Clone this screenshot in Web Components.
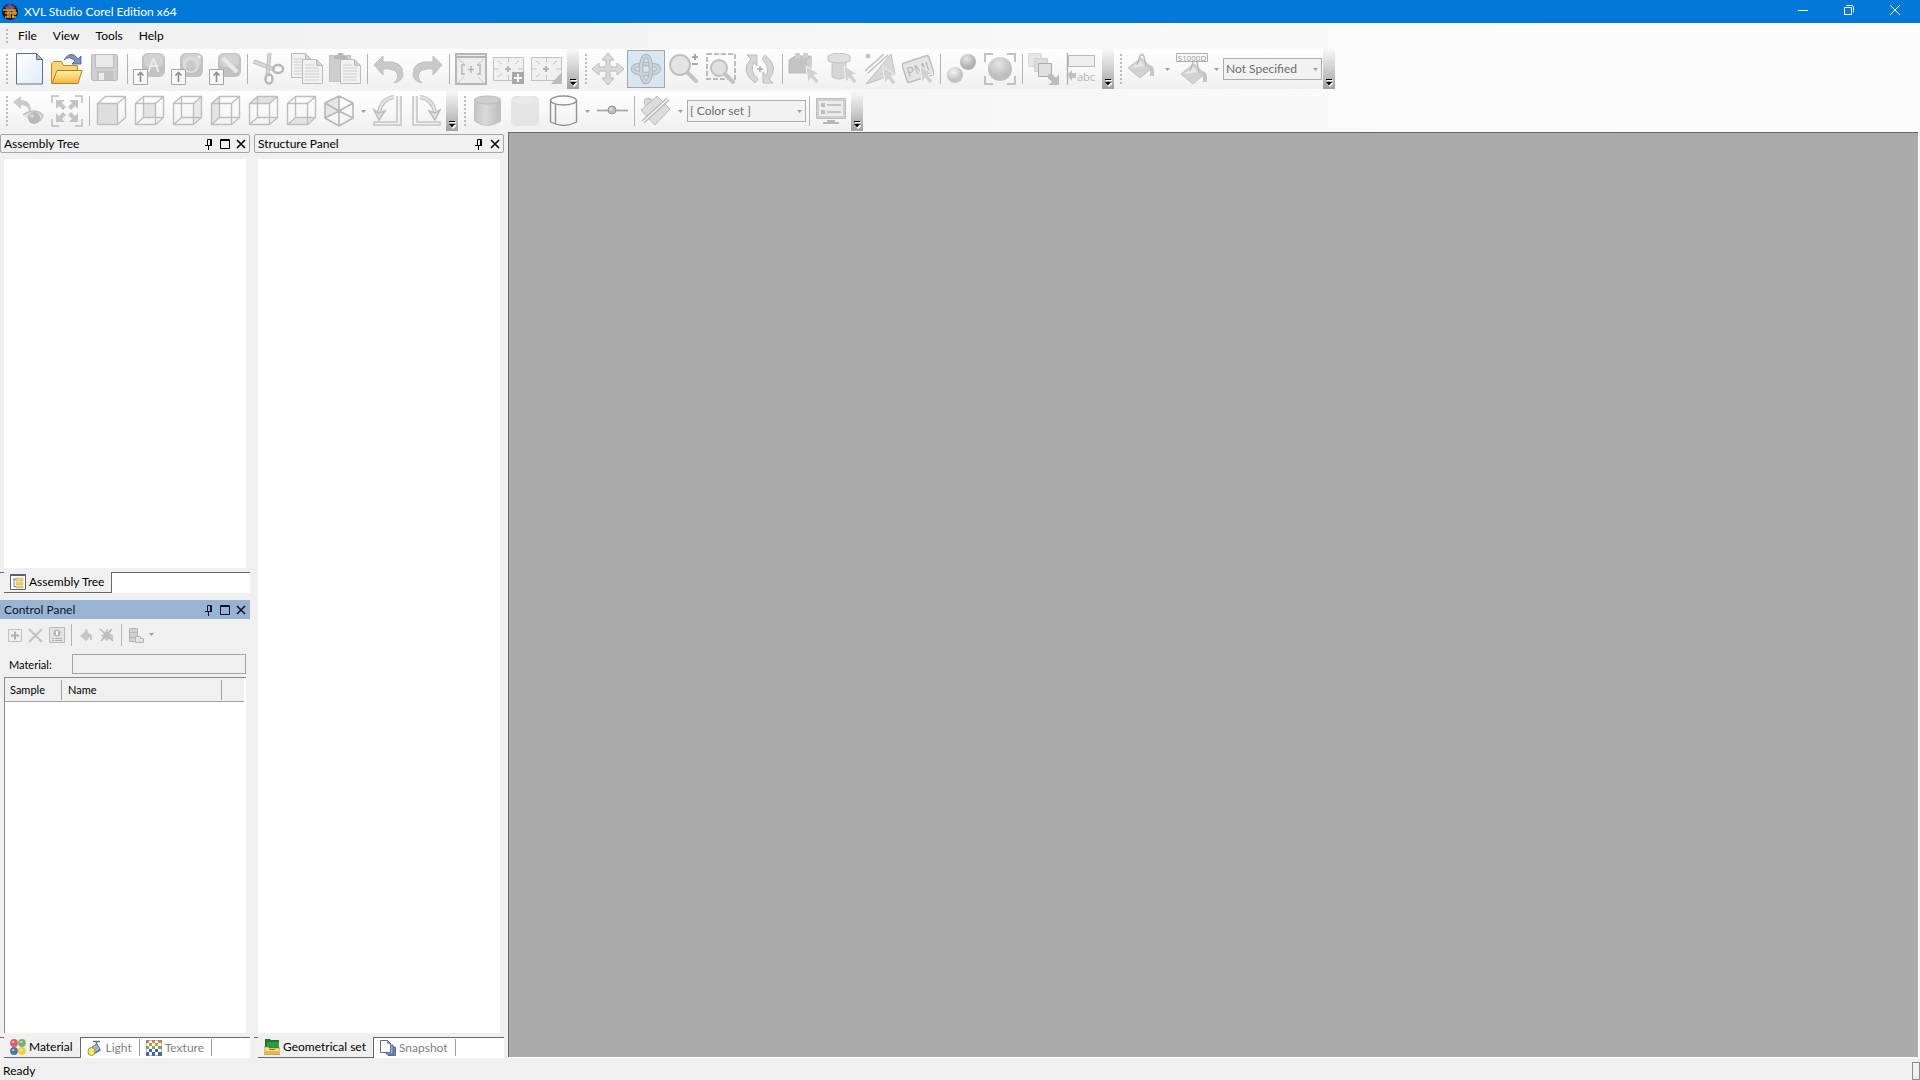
<!DOCTYPE html>
<html lang="en">
<head>
<meta charset="utf-8">
<title>XVL Studio Corel Edition x64</title>
<style>
    html, body {
        height: 100%;
        margin: 0;
    }

    body {
        font: 12px/16px Lato, "Open Sans", sans-serif;
        color: #000;
        background: #f0f0f0;
        overflow: hidden;
    }
</style>
</head>
<body>
<studio-app></studio-app>

<script>
// ---------- icons ----------
const S = 'fill="none" stroke="#b6b6b6"'
const cube = (front, extra = '', back = true) => `
    <g stroke="#bebebe" stroke-width="1.4" stroke-linejoin="round" fill="none">
        ${extra}
        ${back ? '<path d="M10.5 1.5v21h20M10.5 22.5l-8 7"/>' : ''}
        <path fill="${front}" d="M2.5 8.5h20v21h-20z"/>
        <path d="M2.5 8.5l8-7h20v21l-8 7M22.5 8.5l8-7"/>
    </g>`
const badge = inner => `
    <rect x="9" y="0" width="23" height="24" rx="6" fill="#c2c2c2"/>
    <rect x="11" y="1" width="19" height="13" rx="5" fill="#d2d2d2"/>
    ${inner}
    <path fill="#f7f7f7" stroke="#a6a6a6" d="M.5 16.5h14v15H.5z"/>
    <path stroke="#8e8e8e" stroke-width="1.6" fill="none" d="M7.5 29V20M4.5 22.500l3-3 3 3"/>`
const sheet = (x, y) => `
    <path fill="#f1f1f1" stroke="#bcbcbc" d="M${x}.5 ${y}.5h14l6 6v18h-20z"/>
    <path fill="#d4d4d4" stroke="#bcbcbc" d="M${x + 14}.5 ${y}.5v6h6z"/>
    <path stroke="#cfcfcf" d="M${x + 3} ${y + 6}h9M${x + 3} ${y + 9}h14M${x + 3} ${y + 12}h14M${x + 3} ${y + 15}h14M${x + 3} ${y + 18}h14M${x + 3} ${y + 21}h14"/>`
const cursor = (x, y) => `<path transform="translate(${x} ${y})" fill="#d2d2d2" stroke="#f4f4f4" d="M0 0l13 8-5 1 5 6-3 3-5-6-3 5z"/>`
const bucket = `
    <path fill="#d2d2d2" stroke="#c4c4c4" d="M1 15L14 5l11 10-12 10z"/>
    <path fill="#e8e8e8" d="M4 15l9-7 5 5z"/>
    <path fill="none" stroke="#b8b8b8" stroke-width="1.4" d="M10 12l3-9q3-4 4 1l2 9"/>
    <path fill="#c6c6c6" d="M17 13q10-3 10 5v5h-4v-5q0-4-6-5z"/>`
const smallBucket = `
    <path fill="#c6c6c6" d="M2 9l6-5 5 5-5 5z"/>
    <path fill="none" stroke="#c2c2c2" d="M6 8l2-6 3 6"/>
    <path fill="#c6c6c6" d="M10 7q4-1 4 3v3h-2V10z"/>`
const corners = '<path fill="none" stroke="#c2c2c2" stroke-width="2" d="M1 9V1h8M23 1h8v8M31 23v8h-8M9 31H1v-8"/>'

const icons = {
    app: `<circle cx="8" cy="8" r="8" fill="#24192b"/><path fill="#72508e" d="M3 3l5-3 5 3-2 4H5z"/><path fill="none" stroke="#e09b25" stroke-width="1.5" d="M1 6h5v7M3 9h4M8 14V6h5v5M8 9h7M11 6v8"/><path stroke="#ffcf55" d="M3 13h4M10 13h4"/>`,
    min: '<path stroke="#fff" d="M3 8.5h10"/>',
    restore: '<path fill="none" stroke="#fff" d="M3.500 5.500h7v7h-7zM5.500 3.500h5q2 0 2 2v5"/>',
    close: '<path stroke="#fff" d="M3 3l10 10M13 3L3 13"/>',
    pin: '<path fill="none" stroke="currentColor" d="M4.500 7V1.500h4V7M2 7.500h7M5.500 8v4"/><path stroke="currentColor" d="M7.500 2v5"/>',
    max: '<path fill="none" stroke="currentColor" d="M1.500 1.500h9v9h-9z"/><path stroke="currentColor" d="M1 2.500h10"/>',
    x: '<path stroke="currentColor" stroke-width="1.6" d="M2 2l8 8M10 2L2 10"/>',
    drop: '<path fill="#9d9d9d" d="M0 0h5L2.500 3z"/>',
    overflow: '<path fill="#fff" d="M2 2h6v1H2zM2 5h6v1L5 9 2 6z"/><path fill="#000" d="M1 1h6v1H1zM1 4h6L4 7.500z"/>',

    newFile: `<linearGradient id="g" x1="0" y1="0" x2="1" y2="1"><stop offset="0" stop-color="#fff"/><stop offset="1" stop-color="#e2ebfa"/></linearGradient>
        <path fill="url(#g)" stroke="#5f6f8f" d="M3.500.5h20l6 6v24.500h-26z"/><path fill="#aab9d6" stroke="#5f6f8f" d="M23.500.5v6h6z"/>`,
    open: `<linearGradient id="g" x1="0" y1="0" x2="0" y2="1"><stop offset="0" stop-color="#fff0a8"/><stop offset="1" stop-color="#f3b83c"/></linearGradient>
        <path fill="#f8d678" stroke="#b68a2c" d="M.5 30.500v-20l2-2h8l2 4h14v6"/>
        <path fill="url(#g)" stroke="#b07f22" d="M1 30.500l5-13h25l-4 13z"/>
        <path fill="#7f93bd" stroke="#465a86" stroke-width=".8" d="M13 7q7-11 14-1l3-3v8l-9 0 3-3q-6-6-11-1z"/>`,
    save: `<rect x="2.500" y="1.500" width="26" height="26" rx="2" fill="#d0d0d0" stroke="#b6b6b6"/><path fill="#e9e9e9" stroke="#bdbdbd" d="M6.500 1.500h18v13h-18z"/><path fill="#c2c2c2" d="M8 18h16v9H8z"/><path fill="#ececec" d="M10 20h5v7h-5z"/>`,
    importA: badge('<path fill="none" stroke="#e9e9e9" stroke-width="2" d="M20.500 5l-5 14M20.500 5l5 14M16 13h9"/>'),
    importB: badge('<circle cx="20" cy="12" r="7" fill="none" stroke="#dedede" stroke-width="2"/><circle cx="20" cy="12" r="4" fill="#c9c9c9"/><circle cx="28" cy="4" r="1.500" fill="#f2f2f2"/>'),
    importC: badge('<path stroke="#e9e9e9" stroke-width="4" d="M14 5l14 14"/>'),
    cut: `<path fill="#dadada" stroke="#bcbcbc" d="M0 10l2-3 20 8-2 3zM15 1l3-1-2 22-3-1z"/><ellipse cx="25" cy="16" rx="5" ry="4" fill="none" stroke="#b8b8b8" stroke-width="2.500"/><ellipse cx="16" cy="26" rx="3.500" ry="4.500" fill="none" stroke="#b8b8b8" stroke-width="2.500"/>`,
    copy: sheet(0, 0) + sheet(11, 6),
    paste: `<path fill="#cecece" stroke="#c2c2c2" d="M.5 2.500h21v26H.5z"/><path fill="#b8b8b8" d="M5 3h3l1-3h5l1 3h3v3H5z"/>` + sheet(11, 6),
    undo: '<path fill="#cacaca" stroke="#c0c0c0" d="M1 12L10 3v6q20-2 20 12 0 7-9 9 5-4 3-10-3-5-14-4v6z"/>',
    redo: '<path fill="#cacaca" stroke="#c0c0c0" d="M31 12L22 3v6Q2 7 2 21q0 7 9 9-5-4-3-10 3-5 14-4v6z"/>',
    fitAll: `<path fill="#ededed" stroke="#b6b6b6" stroke-width="2" d="M1 1h30v30H1z"/><path stroke="#b6b6b6" stroke-width="2" d="M1 4h30"/><path stroke="#c6c6c6" d="M3 6l6 5M29 6l-6 5M3 30l6-6M29 30l-6-6"/><path ${S} stroke-width="1.500" d="M10 12H7v9h3M22 12h3v9h-3M16 13v7M13 16.500h6"/>`,
    viewAdd: `<path fill="#f0f0f0" stroke="#c2c2c2" d="M.5 4.500h30v23H.5z"/><path stroke="#b4b4b4" stroke-width="2" d="M15 13v6M12 16h6"/><path stroke="#c4c4c4" d="M15.500 5v5M15.500 22v5M1 16h5M25 16h5M5 8l4 3M26 8l-4 3M5 24l4-3"/><path fill="#a8a8a8" d="M19 19h12v12H19z"/><path stroke="#fff" stroke-width="2" d="M25 21v8M21 25h8"/>`,
    viewEdit: `<path fill="#f0f0f0" stroke="#c2c2c2" d="M.5 4.500h30v23H.5z"/><path stroke="#b4b4b4" stroke-width="2" d="M15 13v6M12 16h6"/><path stroke="#c4c4c4" d="M15.500 5v5M15.500 22v5M1 16h5M25 16h5M5 8l4 3M26 8l-4 3M5 24l4-3"/><path fill="#bdbdbd" d="M31 19v12H20z"/>`,

    pan: '<path fill="#dadada" stroke="#bababa" d="M16 0l6 7h-4v7h7v-4l7 6-7 6v-4h-7v7h4l-6 7-6-7h4v-7H7v4l-7-6 7-6v4h7V7h-4z"/>',
    rotate: '<g fill="none"><ellipse cx="16" cy="16" rx="13" ry="5" stroke="#adb6bd" stroke-width="4.500"/><ellipse cx="16" cy="16" rx="13" ry="5" stroke="#cad3da" stroke-width="2.500"/><ellipse cx="16" cy="16" rx="5" ry="13" stroke="#adb6bd" stroke-width="4.500"/><ellipse cx="16" cy="16" rx="5" ry="13" stroke="#cad3da" stroke-width="2.500"/><path stroke="#cad3da" stroke-width="2.500" d="M7 19.600q3 1.200 7 1.400"/></g>',
    zoom: '<path stroke="#c4c4c4" stroke-width="4" stroke-linecap="round" d="M19 19l9 9"/><circle cx="12" cy="12" r="10" fill="#e4e4e4" stroke="#c0c0c0" stroke-width="2"/><path stroke="#a8a8a8" stroke-width="2" d="M24 4h6M27 1v6M24 11h6"/>',
    zoomArea: '<path fill="none" stroke="#a8a8a8" stroke-width="1.500" stroke-dasharray="5 2" d="M1 1h28v25H1z"/><path stroke="#c4c4c4" stroke-width="4" stroke-linecap="round" d="M19 21l8 8"/><circle cx="13" cy="15" r="8" fill="#e0e0e0" stroke="#c0c0c0" stroke-width="2"/>',
    spin: '<path fill="#d6d6d6" stroke="#bebebe" d="M11 30Q-5 18 7 6L3 2h10v11l-3-4Q5 18 14 26zM21 2q15 12 4 24l4 4H19V19l3 4q5-8-4-17z"/><path stroke="#aaa" stroke-width="1.500" d="M16 13v6M13 16h6"/>',
    pickPart: '<path fill="#c4c4c4" stroke="#bababa" d="M1 7l6-4h16l-4 4v13H1z"/><path fill="#cfcfcf" d="M7 0h5v5H7zM15 0h5v5h-5zM19 7l5-4v12l-5 5z"/>' + cursor(18, 13),
    pickFace: '<path fill="#d6d6d6" stroke="#c6c6c6" d="M6 7h14v17q-7 4-14 0z"/><path fill="#e0e0e0" stroke="#c2c2c2" d="M2 3q11-6 22 0v5q-11 4-22 0z"/>' + cursor(18, 13),
    pickEdge: '<circle cx="4" cy="3" r="2.500" fill="#c6c6c6"/><path stroke="#c0c0c0" stroke-width="1.500" d="M1 18L20 1M4 20L24 2"/><path fill="#d8d8d8" stroke="#c0c0c0" d="M2 31L27 1l4 20z"/>' + cursor(19, 14),
    pmi: '<g transform="rotate(-18 16 16)"><rect x="2" y="6" width="28" height="20" rx="2" fill="#e5e5e5" stroke="#bebebe" stroke-width="1.500"/><text x="16" y="21" text-anchor="middle" font-size="13" fill="#b4b4b4" font-family="Open Sans">PMI</text></g>' + cursor(18, 13),
    balls: '<radialGradient id="g" cx=".4" cy=".3"><stop offset="0" stop-color="#f4f4f4"/><stop offset="1" stop-color="#c4c4c4"/></radialGradient><radialGradient id="h" cx=".4" cy=".3"><stop offset="0" stop-color="#e6e6e6"/><stop offset="1" stop-color="#b2b2b2"/></radialGradient><circle cx="9" cy="22" r="8" fill="url(#g)"/><circle cx="22" cy="9" r="8" fill="url(#h)"/>',
    ballFit: '<radialGradient id="g" cx=".45" cy=".3"><stop offset="0" stop-color="#e4e4e4"/><stop offset="1" stop-color="#c0c0c0"/></radialGradient><circle cx="16" cy="16" r="12" fill="url(#g)"/>' + corners,
    explode: '<path fill="#e6e6e6" stroke="#dadada" d="M.5.5h13v13H.5z"/><path fill="#dcdcdc" stroke="#d0d0d0" d="M6.500 5.500h13v13h-13z"/><path fill="#e0e0e0" stroke="#acacac" d="M10.500 10.500h13v13h-13z"/><path fill="#bcbcbc" d="M20 22l3-2 5 5 3-4v11H20l4-3-4-4z"/>',
    callout: '<path fill="#eee" stroke="#b8b8b8" d="M2.500 2.500h26v11h-26z"/><path stroke="#b4b4b4" stroke-width="1.500" d="M1.500 0v32"/><path fill="#c0c0c0" d="M1 22l5-5v3h4v5H6v3z"/><text x="11" y="28" font-size="11" fill="#b4b4b4" font-family="Open Sans">abc</text>',
    bucket,
    s1000d: `<g transform="translate(4 6)">${bucket}</g><path fill="#f8f8f8" stroke="#b0b0b0" d="M.5.5h31v8H.5z"/><text x="16" y="8" text-anchor="middle" font-size="8" fill="#999" font-family="Open Sans">S1000D</text>`,

    viewBack: '<path fill="#cacaca" d="M0 7l8-6v4q10 0 10 12l-2-1q-1-6-8-6v4z"/><path fill="#e0e0e0" stroke="#c0c0c0" stroke-width="1.500" d="M10 20q11-8 20 0-1 7-10 8"/><circle cx="21" cy="23" r="6" fill="#b8b8b8"/><circle cx="19" cy="21" r="2" fill="#d8d8d8"/>',
    fitView: '<path fill="none" stroke="#bcbcbc" stroke-width="1.500" d="M1 8V1h7M24 1h7v7M31 24v7h-7M8 31H1v-7"/><path fill="#c4c4c4" d="M5 5h9l-3 3 4 4-3 3-4-4-3 3zM27 5v9l-3-3-4 4-3-3 4-4-3-3zM5 27v-9l3 3 4-4 3 3-4 4 3 3zM27 27h-9l3-3-4-4 3-3 4 4 3-3z"/>',
    cube1: cube('#dedede', '', false),
    cube2: cube('none', '<path fill="#e4e4e4" stroke="none" d="M10.500 8.500h12v14h-12z"/>'),
    cube3: cube('none', '<path fill="#e8e8e8" stroke="none" d="M22.500 8.500l8-7v21l-8 7z"/>'),
    cube4: cube('none', '<path fill="#e4e4e4" stroke="none" d="M2.500 8.500l8-7v21l-8 7z"/>'),
    cube5: cube('none', '<path fill="#e2e2e2" stroke="none" d="M2.500 8.500l8-7h20l-8 7z"/>'),
    cube6: cube('none', '<path fill="#e4e4e4" stroke="none" d="M2.500 29.500l8-7h20l-8 7z"/>'),
    iso: '<path fill="#e6e6e6" d="M2 8l14-7v15L2 23z"/><path fill="none" stroke="#b8b8b8" stroke-width="1.600" stroke-linejoin="round" d="M16 1l14 7v15l-14 8-14-8V8zM16 1v15M2 8l14 8 14-8M2 23l14-7 14 7M16 16v15"/>',
    turnLeft: '<path fill="#f2f2f2" stroke="#c4c4c4" stroke-width="1.500" d="M29 1v29H2v-3h23V1"/><path fill="none" stroke="#bebebe" stroke-width="4" d="M22 2Q9 4 7 18"/><path fill="none" stroke="#e6e6e6" stroke-width="2" d="M22 2Q9 4 7 18"/><path fill="#dedede" stroke="#bebebe" stroke-width="1.500" d="M2 15l5 3 6-2-6 9z"/>',
    turnRight: '<path fill="#f2f2f2" stroke="#c4c4c4" stroke-width="1.500" d="M3 1v29h27v-3H7V1"/><path fill="none" stroke="#bebebe" stroke-width="4" d="M10 2q13 2 15 16"/><path fill="none" stroke="#e6e6e6" stroke-width="2" d="M10 2q13 2 15 16"/><path fill="#dedede" stroke="#bebebe" stroke-width="1.500" d="M30 15l-5 3-6-2 6 9z"/>',
    cylSolid: '<linearGradient id="g"><stop offset="0" stop-color="#c4c4c4"/><stop offset=".4" stop-color="#dadada"/><stop offset="1" stop-color="#bdbdbd"/></linearGradient><path fill="url(#g)" stroke="#c2c2c2" d="M3.500 5v21q13 9 26 0V5z"/><ellipse cx="16.500" cy="5" rx="13" ry="4" fill="#cecece" stroke="#bcbcbc"/>',
    cylSoft: '<rect x="2" y="1" width="28" height="30" rx="5" fill="#e4e4e4"/><ellipse cx="16" cy="5" rx="13" ry="4" fill="#e9e9e9"/>',
    cylWire: '<g fill="none" stroke="#929292" stroke-width="1.400"><ellipse cx="16.500" cy="5.500" rx="13" ry="4.500"/><path d="M3.500 5.500V27q13 7 26 0V5.500M8.500 9v20"/></g>',
    slider: '<path stroke="#a6a6a6" stroke-width="1.800" d="M1 15.500h31"/><circle cx="16" cy="15" r="4" fill="#bcbcbc" stroke="#999"/><circle cx="15" cy="14" r="1.500" fill="#e2e2e2"/>',
    section: '<circle cx="8" cy="7" r="4" fill="#d6d6d6" stroke="#c0c0c0"/><path fill="#dcdcdc" stroke="#bababa" d="M1 15L17 1l13 13-15 16z"/><path stroke="#f4f4f4" stroke-width="3" d="M3 27L28 4"/><path stroke="#b8b8b8" stroke-width="1.200" d="M2 26L27 3M4 28L29 5"/>',
    display: '<path fill="#d0d0d0" stroke="#bebebe" d="M1.500 3.500h29v20h-29z"/><path fill="#ececec" d="M4 6h24v15H4z"/><path fill="#bebebe" d="M6 8h4v4H6zM6 15h4v4H6z"/><path stroke="#c4c4c4" stroke-width="2" d="M12 10h14M12 17h14"/><path fill="#b8b8b8" d="M12 25h8v2h4v2H8v-2h4z"/>',

    add: '<path fill="#eee" stroke="#c0c0c0" d="M1.500 2.500h13v12h-13z"/><path stroke="#b0b0b0" stroke-width="2" d="M8 4.500v8M4 8.500h8"/>',
    del: '<path stroke="#c4c4c4" stroke-width="2.200" d="M1 2l13 13M14 2L1 15"/>',
    props: '<path fill="#e4e4e4" stroke="#bababa" d="M.5.5h15v15H.5z"/><circle cx="8" cy="6" r="3.500" fill="#b4b4b4"/><path fill="#fff" d="M7 4h2v4H7z"/><path stroke="#b0b0b0" d="M3 11.500h2M6 11.500h7M3 13.500h2M6 13.500h7"/>',
    paint: smallBucket,
    unpaint: smallBucket + '<path stroke="#b8b8b8" stroke-width="1.500" d="M1 2l13 12M13 2L2 14"/>',
    layout: '<path fill="#d0d0d0" stroke="#b6b6b6" d="M1.500 1.500h8v13h-8zM1.500 5.500h8M1.500 10.500h8"/><path fill="#e2e2e2" stroke="#b6b6b6" d="M7.500 9.500h5v2h3v4h-8z"/>',

    tree: '<path fill="#fff" stroke="#56607a" d="M.5.5h15v15H.5z"/><path fill="#56607a" d="M1 1h14v1H1z"/><path fill="none" stroke="#7a7f8c" d="M4 4v8.500h2M4 5.500h2"/><path fill="#f2d27a" stroke="#d2a84a" stroke-width=".6" d="M6 4h7v3H6zM6 8.500h7v2H6zM6 12h7v2H6z"/>',
    material: '<circle cx="4" cy="4" r="3.900" fill="#d9606a"/><circle cx="12" cy="4" r="3.900" fill="#7db068"/><circle cx="4" cy="12" r="3.900" fill="#5373a6"/><circle cx="12" cy="12" r="3.900" fill="#f0d044"/><path stroke="#ffffff99" stroke-width="2" stroke-linecap="round" d="M3 3h.5M11 3h.5M3 11h.5M11 11h.5"/>',
    light: '<path fill="none" stroke="#61738f" stroke-width="1.500" d="M6 1.500h7M9.500 2v4M9 6l4 4-5 3"/><path fill="#a4b3ca" stroke="#5f7291" d="M5 7l5-3 3 5-5 4z"/><ellipse cx="4.500" cy="11.500" rx="3.500" ry="4" fill="#f2ea6a" stroke="#99903a"/>',
    texture: '<path fill="#fff" d="M0 0h16v16H0z"/><path fill="#d98b4a" d="M0 0h3v3H0zM6 0h3v3H6zM12 0h4v3h-4zM3 3h3v3H3zM9 3h3v3H9z"/><path fill="#7da35a" d="M0 6h3v3H0zM6 6h3v3H6zM12 6h4v3h-4z"/><path fill="#43639c" d="M3 9h3v3H3zM9 9h3v3H9zM0 12h3v4H0zM6 12h3v4H6zM12 12h4v4h-4z"/><path fill="none" stroke="#6b7a92" stroke-width=".6" d="M.3.300h15.400v15.400H.3z"/>',
    geometry: '<path fill="#1a7a2c" d="M1 0h5l1 1h8v9H1z"/><path fill="#2b9c40" d="M3 3h12v5H3z"/><path fill="#f5dc98" stroke="#b98a35" stroke-width=".7" d="M0 8h4l1 1h11v6.500H0z"/><path fill="#eab650" d="M1 12h14v3H1z"/><path stroke="#a06f20" d="M5 10.500h6"/>',
    snapshot: '<path fill="#7187b8" stroke="#3e568d" stroke-width=".8" d="M8 7h7.500v8.500H8z"/><path fill="#a3b4d8" stroke="#3e568d" stroke-width=".8" d="M6 5h7v9H6z"/><path fill="#fff" stroke="#4a6090" stroke-width=".9" d="M.5.5h7l3 3v9H.5z"/><path fill="#bccbe6" stroke="#4a6090" stroke-width=".7" d="M7.500.5v3h3z"/>'
}

class StudioIcon extends HTMLElement {
    connectedCallback() {
        const w = this.getAttribute('w') || this.getAttribute('size') || 16
        const h = this.getAttribute('h') || this.getAttribute('size') || 16
        this.attachShadow({ mode: 'open' }).innerHTML = `
            <style>
                :host { display: inline-block; flex: none; line-height: 0; }
                svg { display: block; }
            </style>
            <svg width="${w}" height="${h}" viewBox="0 0 ${w} ${h}" aria-hidden="true">${icons[this.getAttribute('name')]}</svg>`
    }
}

// ---------- title bar ----------
class TitleBar extends HTMLElement {
    constructor() {
        super()
        this.attachShadow({ mode: 'open' }).innerHTML = `
            <style>
                :host {
                    display: flex;
                    align-items: center;
                    height: 23px;
                    padding: 0 2px;
                    color: #fff;
                    background: #0078d7;
                }
                .title { flex: 1; padding-left: 6px; }
                button {
                    display: grid;
                    place-items: center;
                    width: 46px;
                    height: 20px;
                    padding: 0;
                    border: 0;
                    background: none;
                    align-self: flex-start;
                }
            </style>
            <studio-icon name="app"></studio-icon>
            <span class="title"><slot></slot></span>
            <button aria-label="Minimize"><studio-icon name="min"></studio-icon></button>
            <button aria-label="Restore"><studio-icon name="restore"></studio-icon></button>
            <button aria-label="Close"><studio-icon name="close"></studio-icon></button>`
    }
}

// ---------- menu ----------
const gripCss = `
    .grip {
        flex: none;
        width: 2px;
        margin: 0 2px 0 6px;
        background: repeating-linear-gradient(#bcbcbc 0 2px, transparent 2px 4px);
    }`

class MenuBar extends HTMLElement {
    constructor() {
        super()
        this.attachShadow({ mode: 'open' }).innerHTML = `
            <style>
                ${gripCss}
                :host { display: flex; height: 26px; align-items: center; }
                .grip { height: 14px; }
                button {
                    padding: 0 8px;
                    border: 0;
                    background: none;
                    font: inherit;
                    color: inherit;
                }
            </style>
            <span class="grip"></span>
            ${this.getAttribute('items').split(',').map(t => `<button>${t}</button>`).join('')}`
    }
}

// ---------- toolbars ----------
class ToolBar extends HTMLElement {
    constructor() {
        super()
        this.attachShadow({ mode: 'open' }).innerHTML = `
            <style>
                ${gripCss}
                :host {
                    display: flex;
                    align-items: center;
                    height: 40px;
                    background: linear-gradient(#fefefe, #f8f8f8 50%, #f0f0f0);
                }
                .grip { height: 30px; }
                .more {
                    display: flex;
                    align-items: flex-end;
                    justify-content: center;
                    align-self: stretch;
                    width: 12px;
                    margin-left: 1px;
                    padding: 0 0 1px;
                    border: 0;
                    background: linear-gradient(#f8f8f8, #cfcfcf 50%, #a0a0a0);
                }
            </style>
            <span class="grip"></span>
            <slot></slot>
            <button class="more" aria-label="Toolbar options"><studio-icon name="overflow" w="9" h="10"></studio-icon></button>`
    }
}

class ToolButton extends HTMLElement {
    connectedCallback() {
        const small = this.hasAttribute('small')
        const icon = this.getAttribute('icon')
        this.attachShadow({ mode: 'open' }).innerHTML = `
            <style>
                :host { display: flex; flex: none; }
                button {
                    display: grid;
                    place-items: center;
                    box-sizing: border-box;
                    width: ${small ? 21 : 38}px;
                    height: ${small ? 22 : 38}px;
                    padding: 0;
                    border: 1px solid transparent;
                    background: none;
                }
                button.drop { width: 11px; }
                :host([active]) button { border-color: #9aa8b3; background: #d9e6f0; }
            </style>
            <button aria-label="${icon}"><studio-icon name="${icon}" size="${small ? 16 : 32}"></studio-icon></button>
            ${this.hasAttribute('drop') ? `<button class="drop" aria-label="${icon} options"><studio-icon name="drop" w="5" h="3"></studio-icon></button>` : ''}`
    }
}

class ToolSeparator extends HTMLElement {
    constructor() {
        super()
        this.attachShadow({ mode: 'open' }).innerHTML = `
            <style>
                :host { display: flex; justify-content: center; flex: none; width: var(--sep, 6px); height: var(--sep-height, 30px); }
                i { width: 1px; background: #b4b4b4; }
            </style>
            <i></i>`
    }
}

class ToolSelect extends HTMLElement {
    connectedCallback() {
        this.attachShadow({ mode: 'open' }).innerHTML = `
            <style>
                :host { display: grid; align-items: center; flex: none; margin: 0 0 0 1px; }
                select, studio-icon { grid-area: 1 / 1; }
                select {
                    appearance: none;
                    box-sizing: border-box;
                    width: 100%;
                    height: 22px;
                    padding: 0 2px;
                    border: 1px solid #adadad;
                    border-radius: 0;
                    font: inherit;
                    color: #6d6d6d;
                    background: #f2f2f2;
                    opacity: 1;
                }
                studio-icon { justify-self: end; margin-right: 4px; }
            </style>
            <select aria-label="${this.getAttribute('label')}" disabled><option>${this.getAttribute('value')}</option></select>
            <studio-icon name="drop" w="5" h="3"></studio-icon>`
    }
}

// ---------- docked panels ----------
class DockPanel extends HTMLElement {
    constructor() {
        super()
        const tools = this.getAttribute('tools').split(',')
        this.attachShadow({ mode: 'open' }).innerHTML = `
            <style>
                :host { display: flex; flex-direction: column; min-height: 0; }
                header {
                    display: flex;
                    align-items: center;
                    box-sizing: border-box;
                    height: 19px;
                    padding: 0 0 0 3px;
                    border: 1px solid #a6a6a6;
                    border-radius: 2px;
                }
                :host([focused]) header { color: #0b1430; border-color: #99b4d1; border-radius: 0; background: #99b4d1; }
                h2 { flex: 1; margin: 0; font: inherit; }
                header button {
                    display: grid;
                    place-items: center;
                    width: 16px;
                    height: 15px;
                    padding: 0;
                    border: 0;
                    background: none;
                    color: inherit;
                }
                .body {
                    display: flex;
                    flex-direction: column;
                    flex: 1;
                    min-height: 0;
                    margin: 6px 4px 4px;
                    background: #fff;
                }
                :host([focused]) .body { margin-top: 0; background: none; }
            </style>
            <header>
                <h2>${this.getAttribute('heading')}</h2>
                ${tools.map(t => `<button aria-label="${t}"><studio-icon name="${t}" size="12"></studio-icon></button>`).join('')}
            </header>
            <div class="body"><slot></slot></div>
            <slot name="tabs"></slot>`
    }
}

class TabStrip extends HTMLElement {
    constructor() {
        super()
        const tabs = this.getAttribute('tabs').split(',').map(t => t.split(':'))
        this.attachShadow({ mode: 'open' }).innerHTML = `
            <style>
                :host { display: flex; box-sizing: border-box; height: 21px; }
                .lead, .rest { border-top: 1px solid #696969; }
                .lead { width: 4px; }
                .rest { flex: 1; display: flex; align-items: flex-start; background: #fff; }
                button {
                    display: flex;
                    align-items: center;
                    gap: 3px;
                    box-sizing: border-box;
                    padding: 0 7px 0 6px;
                    border: 0;
                    font: inherit;
                    background: none;
                }
                .on {
                    height: 21px;
                    border: solid #696969;
                    border-width: 0 1px 1px 0;
                    color: #000;
                }
                .off { height: 17px; margin-top: 1px; border-right: 1px solid #a0a0a0; color: #808080; }
            </style>
            <span class="lead"></span>
            ${tabs.map(([icon, text], i) => `${i === 1 ? '<span class="rest">' : ''}<button class="${i ? 'off' : 'on'}"><studio-icon name="${icon}"></studio-icon>${text}</button>`).join('')}
            ${tabs.length > 1 ? '</span>' : '<span class="rest"></span>'}`
    }
}

class MaterialPane extends HTMLElement {
    constructor() {
        super()
        this.attachShadow({ mode: 'open' }).innerHTML = `
            <style>
                :host {
                    display: flex;
                    flex-direction: column;
                    flex: 1;
                    font-size: 11px;
                    --sep: 8px;
                    --sep-height: 22px;
                }
                .tools { display: flex; align-items: center; height: 31px; }
                .field { display: flex; align-items: flex-start; height: 23px; padding: 4px 0 0 5px; }
                label { width: 63px; line-height: 22px; }
                input {
                    flex: 1;
                    min-width: 0;
                    box-sizing: border-box;
                    height: 20px;
                    border: 1px solid #a6a6a6;
                    background: #f0f0f0;
                }
                .list { flex: 1; border: solid #8a8a8a; border-width: 1px 0 0 1px; background: #fff; }
                table { width: calc(100% - 2px); border-collapse: collapse; table-layout: fixed; }
                th {
                    height: 23px;
                    padding: 0 0 0 6px;
                    border-bottom: 1px solid #a0a0a0;
                    font-weight: normal;
                    text-align: left;
                    background: linear-gradient(#a0a0a0, #a0a0a0) right center / 1px 20px no-repeat #f0f0f0;
                }
                th:first-child { padding-left: 5px; width: 52px; }
                td { width: 22px; height: 23px; padding: 0; border-bottom: 1px solid #a0a0a0; background: #f0f0f0; }
            </style>
            <div class="tools">
                <tool-button small icon="add"></tool-button>
                <tool-button small icon="del"></tool-button>
                <tool-button small icon="props"></tool-button>
                <tool-separator></tool-separator>
                <tool-button small icon="paint"></tool-button>
                <tool-button small icon="unpaint"></tool-button>
                <tool-separator></tool-separator>
                <tool-button small icon="layout" drop></tool-button>
            </div>
            <div class="field"><label for="material">Material:</label><input id="material" disabled></div>
            <div class="list">
                <table><tr><th>Sample</th><th>Name</th><td></td></tr></table>
            </div>`
    }
}

class StatusBar extends HTMLElement {
    constructor() {
        super()
        this.attachShadow({ mode: 'open' }).innerHTML = `
            <style>
                :host { display: flex; align-items: flex-end; height: 22px; padding-left: 3px; }
                span { flex: 1; line-height: 18px; }
                i { box-sizing: border-box; width: 8px; height: 18px; border: 1px solid #8c8c8c; }
            </style>
            <span><slot></slot></span><i></i>`
    }
}

// ---------- the whole window ----------
const buttons = names => names.split(' ').map(n => {
    if (n === '|') return '<tool-separator></tool-separator>'
    const [icon, flag = ''] = n.split(':')
    return `<tool-button icon="${icon}" ${flag}></tool-button>`
}).join('')

class StudioApp extends HTMLElement {
    constructor() {
        super()
        this.attachShadow({ mode: 'open' }).innerHTML = `
            <style>
                :host { display: flex; flex-direction: column; height: 100vh; }
                .bands { padding-bottom: 1px; background: linear-gradient(90deg, #f0f0f0, #fcfcfc 85%); }
                .row { display: flex; }
                .row + .row { margin-top: 2px; }
                .size-m { width: 119px; }
                .size-s { width: 99px; }
                main {
                    display: grid;
                    grid-template-columns: 250px 250px 1fr;
                    grid-template-rows: minmax(0, 1fr);
                    gap: 4px;
                    flex: 1;
                    min-height: 0;
                }
                .column { display: flex; flex-direction: column; gap: 7px; padding-top: 2px; min-height: 0; }
                .assembly { flex: 460; }
                .control { flex: 459; }
                .structure { flex: 1; }
                .canvas {
                    margin: 0 2px 1px 0;
                    border: solid #696969;
                    border-width: 1px 0 0 1px;
                    box-shadow: 1px 1px 0 #fff;
                    background: #ababab;
                }
            </style>
            <title-bar>XVL Studio Corel Edition x64</title-bar>
            <div class="bands">
                <menu-bar items="File,View,Tools,Help"></menu-bar>
                <div class="row">
                    <tool-bar>${buttons('newFile open save | importA importB importC | cut copy paste | undo redo | fitAll viewAdd viewEdit')}</tool-bar>
                    <tool-bar>${buttons('pan rotate:active zoom zoomArea spin | pickPart pickFace pickEdge pmi | balls ballFit | explode callout')}</tool-bar>
                    <tool-bar>${buttons('bucket:drop s1000d:drop')}<tool-select class="size-s" label="Security" value="Not Specified"></tool-select></tool-bar>
                </div>
                <div class="row">
                    <tool-bar>${buttons('viewBack fitView | cube1 cube2 cube3 cube4 cube5 cube6 iso:drop turnLeft turnRight')}</tool-bar>
                    <tool-bar>${buttons('cylSolid cylSoft cylWire:drop slider | section:drop')}<tool-select class="size-m" label="Color set" value="[ Color set ]"></tool-select>${buttons('| display')}</tool-bar>
                </div>
            </div>
            <main>
                <div class="column">
                    <dock-panel class="assembly" heading="Assembly Tree" tools="pin,max,x">
                        <tab-strip slot="tabs" tabs="tree:Assembly Tree"></tab-strip>
                    </dock-panel>
                    <dock-panel class="control" heading="Control Panel" tools="pin,max,x" focused>
                        <material-pane></material-pane>
                        <tab-strip slot="tabs" tabs="material:Material,light:Light,texture:Texture"></tab-strip>
                    </dock-panel>
                </div>
                <div class="column">
                    <dock-panel class="structure" heading="Structure Panel" tools="pin,x">
                        <tab-strip slot="tabs" tabs="geometry:Geometrical set,snapshot:Snapshot"></tab-strip>
                    </dock-panel>
                </div>
                <div class="canvas"></div>
            </main>
            <status-bar>Ready</status-bar>`
    }
}

customElements.define('studio-icon', StudioIcon)
customElements.define('title-bar', TitleBar)
customElements.define('menu-bar', MenuBar)
customElements.define('tool-bar', ToolBar)
customElements.define('tool-button', ToolButton)
customElements.define('tool-separator', ToolSeparator)
customElements.define('tool-select', ToolSelect)
customElements.define('dock-panel', DockPanel)
customElements.define('tab-strip', TabStrip)
customElements.define('material-pane', MaterialPane)
customElements.define('status-bar', StatusBar)
customElements.define('studio-app', StudioApp)
</script>
</body>
</html>
